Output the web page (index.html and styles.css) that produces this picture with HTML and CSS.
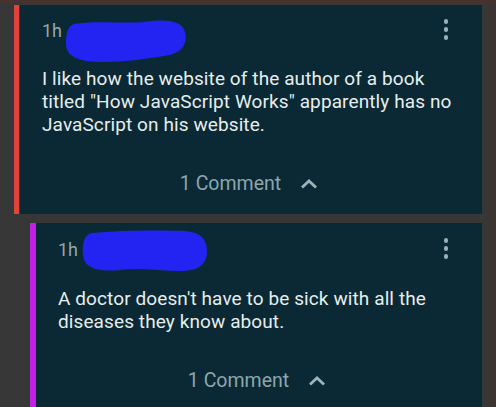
FILE: index.html
```html
<!DOCTYPE html>
<html lang="en">
<head>
<meta charset="utf-8">
<title>Comments</title>
<link rel="stylesheet" href="styles.css">
</head>
<body>
<div class="topstrip"></div>
<div class="thread">
  <div class="comment level-1">
    <div class="bar bar-red"></div>
    <div class="card">
      <div class="header">
        <span class="time">1h</span>
        <svg class="redact" width="124" height="46" viewBox="0 0 124 46"><path d="M10 6 C30 2 60 6 80 4 C100 1 118 2 121 14 C124 28 116 36 100 38 C80 41 60 44 40 44 C18 44 2 40 2 26 C2 14 4 8 10 6 Z" fill="#2323f2"/></svg>
        <span class="menu"><i></i><i></i><i></i></span>
      </div>
      <p class="text">I like how the website of the author of a book titled "How JavaScript Works" apparently has no JavaScript on his website.</p>
      <div class="footer">
        <span class="count">1 Comment</span>
        <svg class="chev" width="18" height="10" viewBox="0 0 18 10"><polyline points="2,8.5 9,2 16,8.5" fill="none" stroke="#9db4ba" stroke-width="2.8"/></svg>
      </div>
    </div>
  </div>
  <div class="comment level-2">
    <div class="bar bar-purple"></div>
    <div class="card">
      <div class="header">
        <span class="time">1h</span>
        <svg class="redact r2" width="128" height="44" viewBox="0 0 128 44"><path d="M12 4 C40 1 80 1 105 2 C120 3 127 10 127 22 C127 36 118 42 100 42 C80 42 60 38 40 41 C20 43 4 40 3 26 C2 14 4 6 12 4 Z" fill="#2323f2"/></svg>
        <span class="menu"><i></i><i></i><i></i></span>
      </div>
      <p class="text">A doctor doesn't have to be sick with all the diseases they know about.</p>
      <div class="footer">
        <span class="count">1 Comment</span>
        <svg class="chev" width="18" height="10" viewBox="0 0 18 10"><polyline points="2,8.5 9,2 16,8.5" fill="none" stroke="#9db4ba" stroke-width="2.8"/></svg>
      </div>
    </div>
  </div>
</div>
</body>
</html>
```
FILE: styles.css
```css
html, body {
  margin: 0;
  padding: 0;
}
body {
  background: linear-gradient(to right, #373737 488px, #3c3431 488px);
  width: 496px;
  height: 407px;
  overflow: hidden;
  font-family: Roboto, "Noto Sans", sans-serif;
}
.topstrip {
  height: 3px;
  background: #48322e;
}
.thread {
  display: flex;
  flex-direction: column;
  gap: 9px;
  padding-top: 2px;
  width: 482px;
}
.comment {
  display: flex;
  gap: 1px;
}
.level-1 {
  margin-left: 14px;
}
.level-2 {
  margin-left: 30px;
}
.bar {
  flex: none;
}
.bar-red {
  width: 5px;
  background: #e2433b;
}
.bar-purple {
  width: 6px;
  background: #c31fe6;
  margin-right: -1px;
}
.card {
  flex: 1;
  background: #0b2934;
  padding: 16px 22px 19px 22px;
  color: #e6edee;
}
.level-2 .card {
  padding-top: 17px;
  padding-bottom: 40px;
}
.header {
  position: relative;
  height: 20px;
  display: flex;
  align-items: flex-start;
}
.time {
  font-size: 18px;
  line-height: 20px;
  color: #93a7ac;
}
.redact {
  position: absolute;
  left: 22px;
  top: -3px;
}
.redact.r2 {
  left: 22px;
  top: -11px;
}
.menu {
  margin-left: auto;
  margin-right: 12px;
  display: flex;
  flex-direction: column;
  gap: 3.5px;
  margin-top: -2px;
}
.menu i {
  display: block;
  width: 4.5px;
  height: 4.5px;
  border-radius: 50%;
  background: #9bb0b5;
}
.text {
  margin: 26px 0 0 0;
  font-size: 19px;
  letter-spacing: 0.1px;
  line-height: 23px;
}
.level-2 .text {
  margin-top: 28px;
  line-height: 22.5px;
}
.footer {
  margin-top: 37px;
  display: flex;
  justify-content: center;
  align-items: center;
  gap: 19px;
  padding-right: 4px;
}
.level-2 .footer {
  margin-top: 37px;
}
.count {
  font-size: 19.5px;
  line-height: 22px;
  color: #8ea6ac;
}
.chev {
  display: block;
}
```
